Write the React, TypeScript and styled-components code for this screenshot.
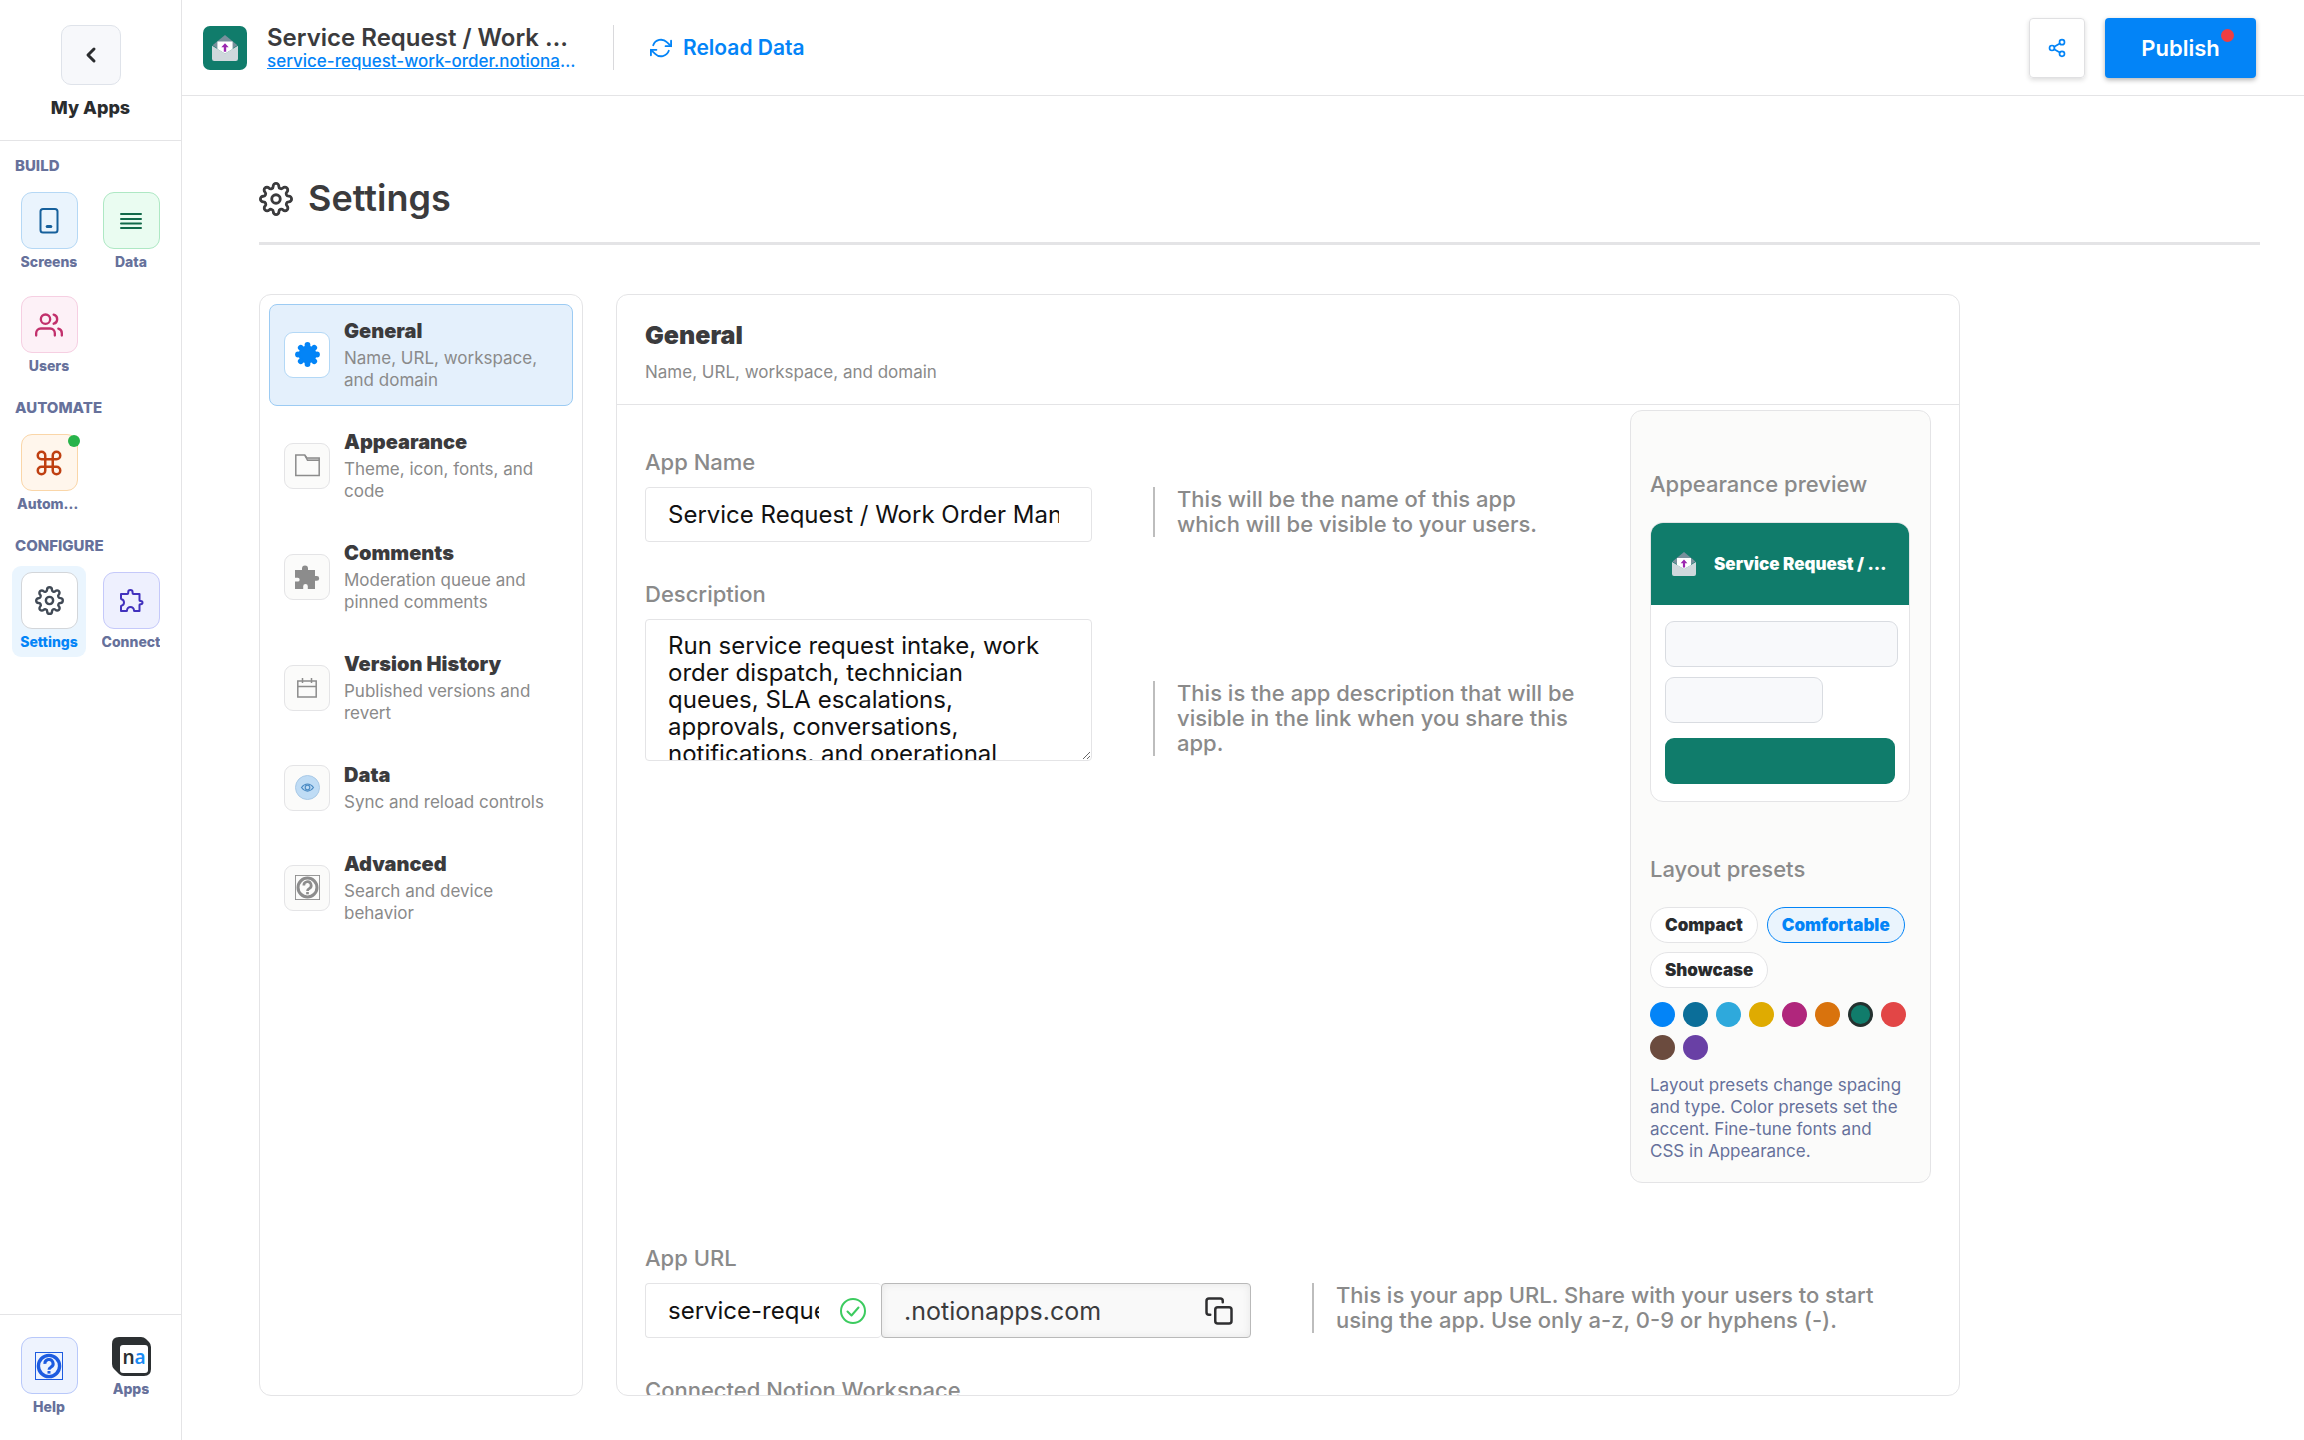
import React, { useState } from "react";
import styled, { createGlobalStyle, css } from "styled-components";
import { FiChevronLeft, FiCommand, FiCopy, FiRefreshCw, FiSettings, FiShare2, FiUsers } from "react-icons/fi";

const color = {
  blue: "#0384f7",
  ink: "#3b3b3d",
  dark: "#2a2c2e",
  grey: "#8a8a8a",
  slate: "#66719b",
  line: "#e4e4e6",
  green: "#107c6b",
};

const GlobalStyle = createGlobalStyle`
  *, *::before, *::after { box-sizing: border-box; }
  body {
    margin: 0;
    background: #fff;
    color: ${color.ink};
    font-family: Inter, "Noto Sans", sans-serif;
  }
  button, input, textarea { font: inherit; color: inherit; }
  button { cursor: pointer; padding: 0; background: none; border: 0; }
  h1, h2, p { margin: 0; }
  svg { display: block; flex: none; }
`;

/* ---------- icons ---------- */

const PhoneIcon = () => (
  <svg width="30" height="30" viewBox="0 0 30 30" fill="none" stroke="currentColor" strokeWidth="2">
    <rect x="6.500" y="3" width="17" height="23.500" rx="2.500" />
    <path d="M13.200 20.500h3.600" strokeWidth="3" strokeLinecap="round" />
  </svg>
);

const LinesIcon = () => (
  <svg width="24" height="18" viewBox="0 0 24 18" stroke="currentColor" strokeWidth="2" strokeLinecap="round">
    <path d="M2 2h20M2 7h20M2 11.500h20M2 16h20" />
  </svg>
);

const PuzzleIcon = () => (
  <svg width="25" height="25" viewBox="0 0 25 25" fill="none" stroke="currentColor" strokeWidth="2" strokeLinejoin="round">
    <path d="M2 6h6.300c.6 0 .9-.3.9-.8v-1a2.200 2.200 0 0 1 4.400 0v1c0 .5.3.8.9.8H20.500v6.300c0 .4.2.6.600.6h.7a1.700 1.700 0 0 1 0 3.400h-.7c-.4 0-.6.2-.6.600V23H15.500c-.3 0-.5-.2-.5-.5a3.500 3.500 0 0 0-7 0c0 .3-.2.500-.5.5H2v-4.600c0-.4.2-.6.500-.7a3.300 3.300 0 0 0 0-6.400c-.3-.1-.5-.3-.5-.7z" />
  </svg>
);

const HelpIcon = ({ size }: { size: number }) => (
  <svg width={size} height={size} viewBox="0 0 28 28" fill="none" stroke="currentColor">
    <rect x="0.500" y="0.500" width="27" height="27" strokeWidth="1" />
    <circle cx="14" cy="14" r="10.600" strokeWidth="3.400" />
    <path d="M9.900 11.800a4.100 4.100 0 1 1 6 3.400c-1.300.8-1.900 1.300-1.900 2.600" strokeWidth="3" />
    <path d="M14 19v2.600" strokeWidth="3" />
  </svg>
);

const FlowerIcon = () => (
  <svg width="25" height="25" viewBox="0 0 25 25" fill="currentColor">
    <circle cx="12.500" cy="12.500" r="9" />
    {[0, 45, 90, 135, 180, 225, 270, 315].map((deg) => (
      <circle key={deg} cx="12.500" cy="3" r="2.900" transform={`rotate(${deg} 12.5 12.5)`} />
    ))}
  </svg>
);

const FolderIcon = () => (
  <svg width="25" height="23" viewBox="0 0 25 23" fill="none" stroke="currentColor" strokeWidth="1.500">
    <path d="M10 1.800h1l1 2.200h12.300v2.300H12.500z" fill="#dcdcdc" stroke="none" />
    <path d="M.8 1h9l2 3h12.400v17.500H.8z" />
    <path d="M10 1.500l2.500 4.800h11.800" />
  </svg>
);

const PuzzleSolidIcon = () => (
  <svg width="25" height="25" viewBox="0 0 25 25" fill="currentColor">
    <path d="M0 6h7v-1.600a3 3 0 0 1 6 0V6h7v6h1.800a2.400 2.400 0 0 1 0 4.800H20V25h-7.200v-2.800a2.300 2.300 0 0 0-4.600 0V25H0v-7.500h2.800a1.800 1.800 0 0 0 0-3.700H0z" />
  </svg>
);

const CalendarIcon = () => (
  <svg width="20" height="20" viewBox="0 0 20 20" fill="none" stroke="currentColor" strokeWidth="1.500">
    <path d="M.8 3h18.400v16H.8zM.8 8.500h18.400M5.500 0v5M14.500 0v5" />
  </svg>
);

const EyeIcon = () => (
  <svg width="25" height="25" viewBox="0 0 25 25" fill="none">
    <circle cx="12.500" cy="12.500" r="12" fill="#bfdcf5" stroke="#a9c9e6" />
    <path d="M6.500 12.500c3.500-4.700 8.500-4.700 12 0-3.500 4.700-8.500 4.700-12 0z" stroke="#4d8cc4" strokeWidth="1.200" />
    <circle cx="12.500" cy="12.500" r="2.300" stroke="#4d8cc4" strokeWidth="1.200" />
  </svg>
);

const CheckIcon = () => (
  <svg width="28" height="28" viewBox="0 0 28 28" fill="none" stroke="#3ccb5f" strokeWidth="2">
    <circle cx="14" cy="14" r="12" />
    <path d="M8.500 14.500l4 4 7-8" strokeLinecap="round" strokeLinejoin="round" />
  </svg>
);

const EnvelopeIcon = ({ size }: { size: number }) => (
  <svg width={size} height={size} viewBox="0 0 24 24">
    <path d="M0.500 9.500L12 0l11.500 9.500L12 17z" fill="#78909c" />
    <path d="M0 10l12 7 12-7v12a2 2 0 0 1-2 2H2a2 2 0 0 1-2-2z" fill="#cfd8dc" />
    <path d="M5 12.900V6h14v6.900L12 17z" fill="#fff" />
    <path d="M12 7.500l-3.400 3.700h2.300v4.300h2.200v-4.300h2.300z" fill="#9c27b0" />
  </svg>
);

const NotionAppsIcon = () => (
  <svg width="39" height="39" viewBox="0 0 39 39">
    <path d="M7 0h22q3 0 5 2l3 3q2 2 2 5v22q0 7-7 7H12q-3 0-5-2l-5-5q-2-2-2-5V7q0-7 7-7z" fill="#2c3032" />
    <rect x="8" y="8" width="28" height="28" rx="3" fill="#fff" />
    <text x="22" y="27" textAnchor="middle" fontFamily="Noto Sans, sans-serif" fontWeight="600" fontSize="19" fill="#2c3032">
      n<tspan fill="#1a8cf5">a</tspan>
    </text>
  </svg>
);

/* ---------- shell ---------- */

const Shell = styled.div`
  display: flex;
  height: 100vh;
  overflow: hidden;
`;

const Sidebar = styled.nav`
  display: flex;
  flex-direction: column;
  flex: none;
  width: 182px;
  border-right: 1px solid ${color.line};
`;

const BackArea = styled.div`
  display: flex;
  flex-direction: column;
  align-items: center;
  gap: 12px;
  height: 141px;
  padding-top: 25px;
  border-bottom: 1px solid ${color.line};
  font-size: 18px;
  line-height: 22px;
  font-weight: 800;
  color: ${color.dark};
`;

const BackButton = styled.button`
  display: grid;
  place-items: center;
  width: 60px;
  height: 60px;
  border: 1px solid #dfe3ea;
  border-radius: 10px;
  background: #f7f8fb;
`;

const NavGroups = styled.div`
  display: flex;
  flex-direction: column;
  flex: 1;
  gap: 18px;
  padding: 16px 0 16px 12px;
`;

const NavGroup = styled.section`
  display: flex;
  flex-direction: column;
  gap: 11px;
`;

const GroupLabel = styled.h2`
  padding-left: 3px;
  font-size: 15px;
  line-height: 18px;
  font-weight: 800;
  color: ${color.slate};
`;

const NavGrid = styled.div`
  display: grid;
  grid-template-columns: 74px 74px;
  gap: 13px 8px;
`;

const NavItem = styled.button<{ $active?: boolean }>`
  display: flex;
  flex-direction: column;
  align-items: center;
  gap: 4px;
  min-width: 0;
  padding: 6px 5px;
  border-radius: 9px;
  background: ${(p) => (p.$active ? "#eaf5fe" : "none")};
  font-size: 14px;
  line-height: 18px;
  font-weight: 800;
  color: ${(p) => (p.$active ? color.blue : color.slate)};
`;

const NavLabel = styled.span`
  max-width: 100%;
  overflow: hidden;
  text-overflow: ellipsis;
  white-space: nowrap;
`;

const tones = {
  blue: css`background: #eaf4fd; border-color: #b5d8f5; color: #16609c;`,
  green: css`background: #eafcf1; border-color: #aee8c4; color: #12694a;`,
  pink: css`background: #fdf1f7; border-color: #f6cfe2; color: #c2306c;`,
  orange: css`background: #fff6ec; border-color: #fad6a8; color: #bf3f10;`,
  plain: css`background: #fff; border-color: #d3d6da; color: #414a56;`,
  indigo: css`background: #eef0fe; border-color: #c5c9fa; color: #4131bd;`,
  help: css`background: #eef3fe; border-color: #b8c8fa; color: #1d5be0;`,
};

const IconTile = styled.span<{ $tone: keyof typeof tones }>`
  position: relative;
  display: grid;
  place-items: center;
  width: 57px;
  height: 57px;
  border: 1px solid;
  border-radius: 11px;
  ${(p) => tones[p.$tone]}
`;

const StatusDot = styled.i`
  position: absolute;
  top: 0;
  right: -3px;
  width: 12px;
  height: 12px;
  border-radius: 50%;
  background: #28b34a;
`;

const SidebarFooter = styled.div`
  display: grid;
  grid-template-columns: 74px 74px;
  align-items: start;
  gap: 8px;
  height: 126px;
  padding: 16px 0 16px 12px;
  border-top: 1px solid ${color.line};
`;

const Content = styled.div`
  display: flex;
  flex-direction: column;
  flex: 1;
  min-width: 0;
`;

/* ---------- top bar ---------- */

const TopBar = styled.header`
  display: flex;
  align-items: center;
  flex: none;
  height: 96px;
  padding: 0 48px 0 21px;
  border-bottom: 1px solid ${color.line};
`;

const AppLogo = styled.div`
  display: grid;
  place-items: center;
  width: 44px;
  height: 44px;
  margin-right: 20px;
  border-radius: 7px;
  background: ${color.green};
`;

const AppIdentity = styled.div`
  width: 316px;
`;

const AppTitle = styled.div`
  overflow: hidden;
  text-overflow: ellipsis;
  white-space: nowrap;
  font-size: 24px;
  line-height: 26px;
  font-weight: 600;
`;

const AppLink = styled.div`
  overflow: hidden;
  text-overflow: ellipsis;
  white-space: nowrap;
  font-size: 17px;
  line-height: 20px;
  font-weight: 500;
  color: ${color.blue};
  a { color: inherit; }
`;

const BarDivider = styled.div`
  width: 1px;
  height: 45px;
  margin: 0 36px 0 30px;
  background: #d9d9dc;
`;

const ReloadButton = styled.button`
  display: flex;
  align-items: center;
  gap: 11px;
  font-size: 21px;
  line-height: 24px;
  font-weight: 600;
  color: ${color.blue};
`;

const BarActions = styled.div`
  display: flex;
  gap: 20px;
  margin-left: auto;
`;

const ShareButton = styled.button`
  display: grid;
  place-items: center;
  width: 56px;
  height: 60px;
  border: 1px solid #e0e0e2;
  border-radius: 4px;
  box-shadow: 0 2px 5px rgba(0, 0, 0, 0.14);
  color: ${color.blue};
`;

const PublishButton = styled.button`
  position: relative;
  width: 151px;
  height: 60px;
  border-radius: 4px;
  background: ${color.blue};
  box-shadow: 0 2px 5px rgba(0, 0, 0, 0.3);
  font-size: 22px;
  line-height: 26px;
  font-weight: 600;
  color: #fff;
`;

const PublishDot = styled.i`
  position: absolute;
  top: 11px;
  right: 22px;
  width: 13px;
  height: 13px;
  border-radius: 50%;
  background: #ef3e42;
`;

/* ---------- settings page ---------- */

const Page = styled.main`
  display: flex;
  flex-direction: column;
  flex: 1;
  min-height: 0;
  padding: 82px 44px 44px 77px;
`;

const PageTitle = styled.div`
  display: flex;
  align-items: flex-start;
  gap: 15px;
  flex: none;
  height: 67px;
  margin-bottom: 49px;
  border-bottom: 3px solid ${color.line};
  h1 {
    font-size: 36px;
    line-height: 40px;
    font-weight: 600;
  }
  svg { margin-top: 4px; }
`;

const Columns = styled.div`
  display: grid;
  grid-template-columns: 324px minmax(0, 1fr);
  gap: 33px;
  flex: 1;
  min-height: 0;
  max-width: 1701px;
`;

const panel = css`
  border: 1px solid ${color.line};
  border-radius: 12px;
`;

const SectionList = styled.aside`
  ${panel}
  display: flex;
  flex-direction: column;
  gap: 9px;
  padding: 9px;
`;

const SectionButton = styled.button<{ $active: boolean }>`
  display: flex;
  align-items: center;
  gap: 14px;
  padding: 13px 14px 14px;
  border: 1px solid ${(p) => (p.$active ? "#9ccbf3" : "transparent")};
  border-radius: 8px;
  background: ${(p) => (p.$active ? "#e4f0fc" : "none")};
  text-align: left;
`;

const SectionIcon = styled.span<{ $active: boolean }>`
  display: grid;
  place-items: center;
  flex: none;
  width: 46px;
  height: 46px;
  border: 1px solid ${(p) => (p.$active ? "#b3d8f6" : color.line)};
  border-radius: 9px;
  background: ${(p) => (p.$active ? "#fff" : "#fbfbfa")};
  color: ${(p) => (p.$active ? color.blue : "#8c8c8c")};
`;

const SectionText = styled.span`
  display: flex;
  flex-direction: column;
  gap: 3px;
  font-size: 17px;
  line-height: 22px;
  color: ${color.grey};
  strong {
    font-size: 20px;
    line-height: 26px;
    font-weight: 900;
    color: ${color.ink};
  }
`;

const Panel = styled.section`
  ${panel}
  display: flex;
  flex-direction: column;
  overflow: hidden;
`;

const PanelHeader = styled.header`
  display: flex;
  flex-direction: column;
  gap: 10px;
  flex: none;
  height: 110px;
  padding: 24px 28px 0;
  border-bottom: 1px solid ${color.line};
  h2 {
    font-size: 25px;
    line-height: 32px;
    font-weight: 900;
  }
  p {
    font-size: 17px;
    line-height: 22px;
    color: ${color.grey};
  }
`;

const PanelBody = styled.div`
  flex: 1;
  min-height: 0;
  overflow: hidden;
  padding: 5px 28px 0;
`;

const TopRow = styled.div`
  display: flex;
  justify-content: space-between;
  gap: 24px;
  margin-bottom: 63px;
`;

const Fields = styled.div`
  display: flex;
  flex-direction: column;
  gap: 40px;
`;

const TopFields = styled(Fields)`
  padding-top: 40px;
`;

const Label = styled.label`
  display: block;
  margin-bottom: 12px;
  font-size: 22px;
  line-height: 25px;
  font-weight: 500;
  color: ${color.grey};
`;

const FieldRow = styled.div<{ $low?: boolean }>`
  display: flex;
  align-items: ${(p) => (p.$low ? "flex-end" : "flex-start")};
  gap: 61px;
`;

const box = css`
  border: 1px solid ${color.line};
  border-radius: 4px;
  background: #fff;
  font-size: 24px;
  color: #111;
  outline: none;
`;

const TextInput = styled.input`
  ${box}
  width: 447px;
  height: 55px;
  padding: 0 32px 0 22px;
`;

const TextArea = styled.textarea`
  ${box}
  display: block;
  width: 447px;
  height: 142px;
  padding: 12px 36px 0 22px;
  line-height: 27px;
  overflow: hidden;
`;

const Hint = styled.p<{ $wide?: boolean; $raised?: boolean }>`
  width: ${(p) => (p.$wide ? 570 : 424)}px;
  margin-bottom: ${(p) => (p.$raised ? 5 : 0)}px;
  padding-left: 22px;
  border-left: 2px solid #bdbdbd;
  font-size: 22px;
  line-height: 25px;
  font-weight: 500;
  color: ${color.grey};
`;

const UrlGroup = styled.div`
  display: flex;
  width: 606px;
`;

const UrlBox = styled.div`
  ${box}
  display: flex;
  align-items: center;
  width: 236px;
  height: 55px;
  padding: 0 14px 0 22px;
  border-right: 0;
  input {
    flex: 1;
    min-width: 0;
    margin-right: 20px;
    padding: 0;
    border: 0;
    outline: none;
    background: none;
  }
`;

const UrlSuffix = styled.div`
  display: flex;
  align-items: center;
  justify-content: space-between;
  flex: 1;
  padding: 0 16px 0 22px;
  border: 1px solid #b9b9b9;
  border-radius: 4px;
  background: #f9f9f9;
  box-shadow: inset 0 0 8px rgba(0, 0, 0, 0.08);
  font-size: 25px;
  color: ${color.ink};
  button { color: #2f2f31; }
`;

/* ---------- appearance preview ---------- */

const Preview = styled.aside`
  flex: none;
  width: 301px;
  height: 773px;
  padding: 60px 20px 0 19px;
  border: 1px solid ${color.line};
  border-radius: 12px;
  background: #fbfbfa;
`;

const PreviewTitle = styled.h2`
  font-size: 22px;
  line-height: 26px;
  font-weight: 500;
  color: ${color.grey};
`;

const PreviewCard = styled.div`
  margin: 25px 0 54px;
  border: 1px solid ${color.line};
  border-radius: 13px;
  overflow: hidden;
  background: #fff;
`;

const PreviewBar = styled.div`
  display: flex;
  align-items: center;
  gap: 18px;
  height: 82px;
  padding: 0 20px 0 21px;
  background: ${color.green};
  color: #fff;
  font-size: 17px;
  line-height: 22px;
  font-weight: 900;
  span {
    overflow: hidden;
    text-overflow: ellipsis;
    white-space: nowrap;
  }
`;

const PreviewBody = styled.div`
  display: flex;
  flex-direction: column;
  gap: 10px;
  padding: 16px 11px 17px 14px;
`;

const Skeleton = styled.div<{ $short?: boolean }>`
  width: ${(p) => (p.$short ? "68%" : "100%")};
  height: 46px;
  border: 1px solid #d9dce1;
  border-radius: 9px;
  background: #f8f9fb;
`;

const SkeletonAction = styled.div`
  height: 46px;
  margin: 5px 3px 0 0;
  border-radius: 9px;
  background: ${color.green};
`;

const Pills = styled.div`
  display: flex;
  flex-wrap: wrap;
  gap: 9px;
  margin: 25px 0 14px;
`;

const Pill = styled.button<{ $on: boolean }>`
  height: 36px;
  padding: 0 14px;
  border: 1px solid ${(p) => (p.$on ? color.blue : color.line)};
  border-radius: 18px;
  background: ${(p) => (p.$on ? "#eaf4fd" : "#fff")};
  font-size: 17px;
  line-height: 20px;
  font-weight: 900;
  color: ${(p) => (p.$on ? color.blue : color.dark)};
`;

const Swatches = styled.div`
  display: flex;
  flex-wrap: wrap;
  gap: 8px;
  margin-bottom: 14px;
`;

const Swatch = styled.button<{ $fill: string; $on: boolean }>`
  width: 25px;
  height: 25px;
  border: ${(p) => (p.$on ? "3px solid #24312f" : "0")};
  border-radius: 50%;
  background: ${(p) => p.$fill};
`;

const PresetNote = styled.p`
  font-size: 17px;
  line-height: 22px;
  color: ${color.slate};
`;

/* ---------- data ---------- */

const sections = [
  { name: "General", note: "Name, URL, workspace, and domain", icon: <FlowerIcon /> },
  { name: "Appearance", note: "Theme, icon, fonts, and code", icon: <FolderIcon /> },
  { name: "Comments", note: "Moderation queue and pinned comments", icon: <PuzzleSolidIcon /> },
  { name: "Version History", note: "Published versions and revert", icon: <CalendarIcon /> },
  { name: "Data", note: "Sync and reload controls", icon: <EyeIcon /> },
  { name: "Advanced", note: "Search and device behavior", icon: <HelpIcon size={25} /> },
];

const presets = ["Compact", "Comfortable", "Showcase"];

const swatches = [
  ["Blue", "#0384f7"], ["Teal", "#0b6e99"], ["Sky", "#2ea9dc"], ["Yellow", "#dfab01"], ["Magenta", "#b0267c"],
  ["Orange", "#d9730d"], ["Green", "#107c6b"], ["Red", "#e24646"], ["Brown", "#6b4b3e"], ["Purple", "#6940a5"],
];

const description =
  "Run service request intake, work order dispatch, technician queues, SLA escalations, approvals, conversations, notifications, and operational reporting.";

export default function App() {
  const [section, setSection] = useState("General");
  const [preset, setPreset] = useState("Comfortable");
  const [accent, setAccent] = useState("Green");

  return (
    <Shell>
      <GlobalStyle />
      <Sidebar>
        <BackArea>
          <BackButton aria-label="Back to my apps"><FiChevronLeft size={24} strokeWidth={3} /></BackButton>
          My Apps
        </BackArea>
        <NavGroups>
          <NavGroup>
            <GroupLabel>BUILD</GroupLabel>
            <NavGrid>
              <NavItem><IconTile $tone="blue"><PhoneIcon /></IconTile><NavLabel>Screens</NavLabel></NavItem>
              <NavItem><IconTile $tone="green"><LinesIcon /></IconTile><NavLabel>Data</NavLabel></NavItem>
              <NavItem><IconTile $tone="pink"><FiUsers size={28} /></IconTile><NavLabel>Users</NavLabel></NavItem>
            </NavGrid>
          </NavGroup>
          <NavGroup>
            <GroupLabel>AUTOMATE</GroupLabel>
            <NavGrid>
              <NavItem>
                <IconTile $tone="orange"><FiCommand size={30} /><StatusDot /></IconTile>
                <NavLabel>Automations</NavLabel>
              </NavItem>
            </NavGrid>
          </NavGroup>
          <NavGroup>
            <GroupLabel>CONFIGURE</GroupLabel>
            <NavGrid>
              <NavItem $active><IconTile $tone="plain"><FiSettings size={29} /></IconTile><NavLabel>Settings</NavLabel></NavItem>
              <NavItem><IconTile $tone="indigo"><PuzzleIcon /></IconTile><NavLabel>Connect</NavLabel></NavItem>
            </NavGrid>
          </NavGroup>
        </NavGroups>
        <SidebarFooter>
          <NavItem><IconTile $tone="help"><HelpIcon size={28} /></IconTile><NavLabel>Help</NavLabel></NavItem>
          <NavItem><NotionAppsIcon /><NavLabel>Apps</NavLabel></NavItem>
        </SidebarFooter>
      </Sidebar>

      <Content>
        <TopBar>
          <AppLogo><EnvelopeIcon size={26} /></AppLogo>
          <AppIdentity>
            <AppTitle>Service Request / Work Order Manager</AppTitle>
            <AppLink><a href="#app">service-request-work-order.notionapps.com</a></AppLink>
          </AppIdentity>
          <BarDivider />
          <ReloadButton><FiRefreshCw size={22} />Reload Data</ReloadButton>
          <BarActions>
            <ShareButton aria-label="Share"><FiShare2 size={20} /></ShareButton>
            <PublishButton>Publish<PublishDot /></PublishButton>
          </BarActions>
        </TopBar>

        <Page>
          <PageTitle>
            <FiSettings size={34} />
            <h1>Settings</h1>
          </PageTitle>
          <Columns>
            <SectionList>
              {sections.map((s) => (
                <SectionButton key={s.name} $active={s.name === section} onClick={() => setSection(s.name)}>
                  <SectionIcon $active={s.name === section}>{s.icon}</SectionIcon>
                  <SectionText><strong>{s.name}</strong>{s.note}</SectionText>
                </SectionButton>
              ))}
            </SectionList>

            <Panel>
              <PanelHeader>
                <h2>General</h2>
                <p>Name, URL, workspace, and domain</p>
              </PanelHeader>
              <PanelBody>
                <TopRow>
                  <TopFields>
                    <div>
                      <Label htmlFor="app-name">App Name</Label>
                      <FieldRow>
                        <TextInput id="app-name" defaultValue="Service Request / Work Order Manager" />
                        <Hint>This will be the name of this app which will be visible to your users.</Hint>
                      </FieldRow>
                    </div>
                    <div>
                      <Label htmlFor="app-description">Description</Label>
                      <FieldRow $low>
                        <TextArea id="app-description" defaultValue={description} />
                        <Hint $raised>This is the app description that will be visible in the link when you share this app.</Hint>
                      </FieldRow>
                    </div>
                  </TopFields>

                  <Preview>
                    <PreviewTitle>Appearance preview</PreviewTitle>
                    <PreviewCard>
                      <PreviewBar><EnvelopeIcon size={24} /><span>Service Request / Work Order Manager</span></PreviewBar>
                      <PreviewBody>
                        <Skeleton />
                        <Skeleton $short />
                        <SkeletonAction />
                      </PreviewBody>
                    </PreviewCard>
                    <PreviewTitle>Layout presets</PreviewTitle>
                    <Pills>
                      {presets.map((p) => (
                        <Pill key={p} $on={p === preset} onClick={() => setPreset(p)}>{p}</Pill>
                      ))}
                    </Pills>
                    <Swatches>
                      {swatches.map(([name, fill]) => (
                        <Swatch key={name} aria-label={name} $fill={fill} $on={name === accent} onClick={() => setAccent(name)} />
                      ))}
                    </Swatches>
                    <PresetNote>
                      Layout presets change spacing and type. Color presets set the accent. Fine-tune fonts and CSS in Appearance.
                    </PresetNote>
                  </Preview>
                </TopRow>

                <Fields>
                  <div>
                    <Label htmlFor="app-url">App URL</Label>
                    <FieldRow>
                      <UrlGroup>
                        <UrlBox>
                          <input id="app-url" defaultValue="service-request-work-order" />
                          <CheckIcon />
                        </UrlBox>
                        <UrlSuffix>
                          .notionapps.com
                          <button aria-label="Copy URL"><FiCopy size={30} /></button>
                        </UrlSuffix>
                      </UrlGroup>
                      <Hint $wide>This is your app URL. Share with your users to start using the app. Use only a-z, 0-9 or hyphens (-).</Hint>
                    </FieldRow>
                  </div>
                  <Label as="div">Connected Notion Workspace</Label>
                </Fields>
              </PanelBody>
            </Panel>
          </Columns>
        </Page>
      </Content>
    </Shell>
  );
}
